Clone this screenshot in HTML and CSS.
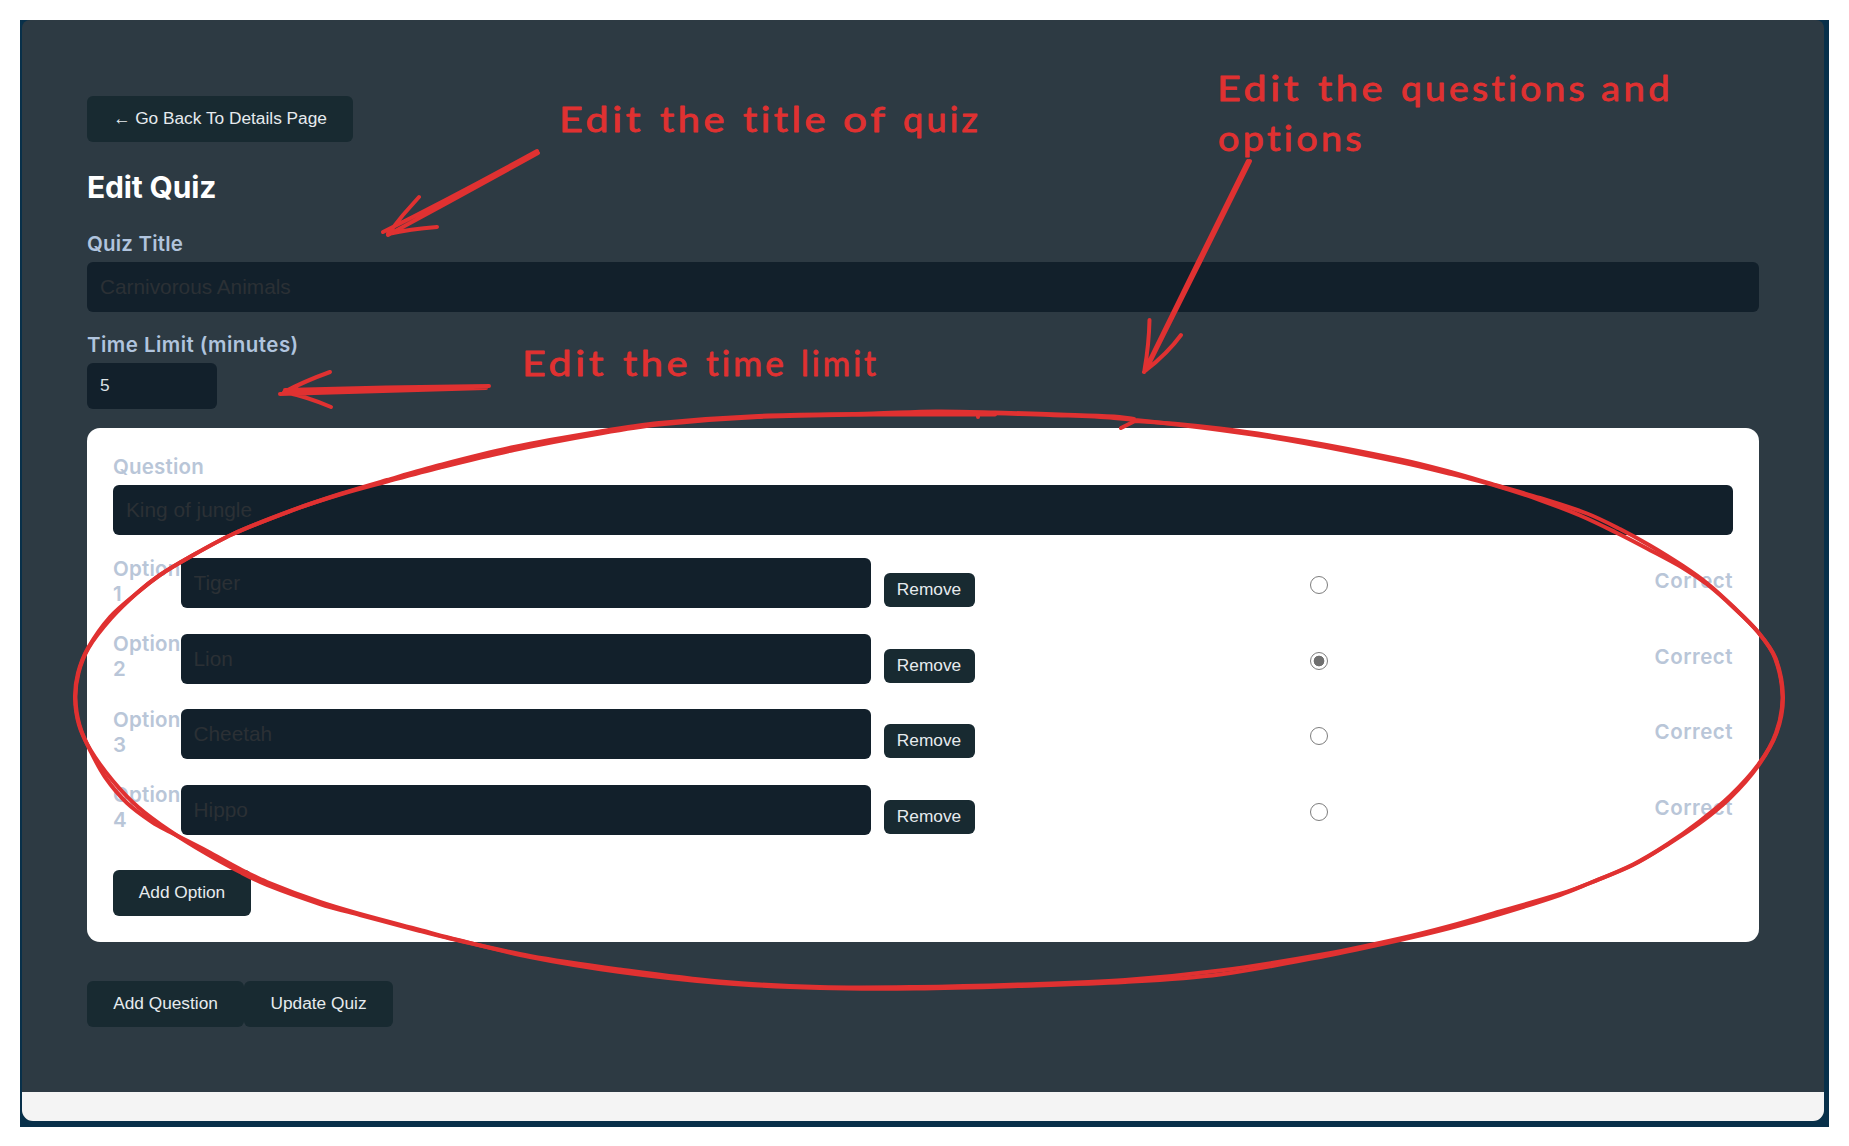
FILE: index.html
```html
<!DOCTYPE html>
<html lang="en">
<head>
<meta charset="utf-8">
<title>Edit Quiz</title>
<link rel="stylesheet" href="styles.css">
</head>
<body>
<div class="frame">
  <div class="window">
    <main class="page">
      <button class="btn back">← Go Back To Details Page</button>
      <h1 class="heading">Edit Quiz</h1>
      <label class="label" for="title">Quiz Title</label>
      <input class="field" id="title" value="Carnivorous Animals">
      <label class="label time-label" for="limit">Time Limit (minutes)</label>
      <input class="field field-small" id="limit" value="5">

      <section class="card">
        <label class="label" for="question">Question</label>
        <input class="field" id="question" value="King of jungle">
        <div class="options">
          <div class="option">
            <label class="label option-label" for="o1">Option 1</label>
            <input class="field option-field" id="o1" value="Tiger">
            <button class="btn remove">Remove</button>
            <div class="choice"><input class="radio" type="radio" name="correct" id="r1"></div>
            <label class="label correct" for="r1">Correct</label>
          </div>
          <div class="option">
            <label class="label option-label" for="o2">Option 2</label>
            <input class="field option-field" id="o2" value="Lion">
            <button class="btn remove">Remove</button>
            <div class="choice"><input class="radio" type="radio" name="correct" id="r2" checked></div>
            <label class="label correct" for="r2">Correct</label>
          </div>
          <div class="option">
            <label class="label option-label" for="o3">Option 3</label>
            <input class="field option-field" id="o3" value="Cheetah">
            <button class="btn remove">Remove</button>
            <div class="choice"><input class="radio" type="radio" name="correct" id="r3"></div>
            <label class="label correct" for="r3">Correct</label>
          </div>
          <div class="option">
            <label class="label option-label" for="o4">Option 4</label>
            <input class="field option-field" id="o4" value="Hippo">
            <button class="btn remove">Remove</button>
            <div class="choice"><input class="radio" type="radio" name="correct" id="r4"></div>
            <label class="label correct" for="r4">Correct</label>
          </div>
        </div>
        <button class="btn add-option">Add Option</button>
      </section>

      <div class="actions">
        <button class="btn add-question">Add Question</button>
        <button class="btn update">Update Quiz</button>
      </div>
    </main>
    <footer class="footer"></footer>
  </div>
</div>

<svg class="notes" width="1849" height="1146" viewBox="0 0 1849 1146">
  <g class="note-text">
    <text y="132"><tspan x="559" textLength="85" lengthAdjust="spacingAndGlyphs">Edit</tspan> <tspan x="660" textLength="68" lengthAdjust="spacingAndGlyphs">the</tspan> <tspan x="743" textLength="86" lengthAdjust="spacingAndGlyphs">title</tspan> <tspan x="843" textLength="45" lengthAdjust="spacingAndGlyphs">of</tspan> <tspan x="903" textLength="78" lengthAdjust="spacingAndGlyphs">quiz</tspan></text>
    <text y="376"><tspan x="522" textLength="85" lengthAdjust="spacingAndGlyphs">Edit</tspan> <tspan x="623" textLength="68" lengthAdjust="spacingAndGlyphs">the</tspan> <tspan x="706" textLength="81" lengthAdjust="spacingAndGlyphs">time</tspan> <tspan x="801" textLength="78" lengthAdjust="spacingAndGlyphs">limit</tspan></text>
    <text y="101"><tspan x="1217" textLength="85" lengthAdjust="spacingAndGlyphs">Edit</tspan> <tspan x="1318" textLength="68" lengthAdjust="spacingAndGlyphs">the</tspan> <tspan x="1401" textLength="187" lengthAdjust="spacingAndGlyphs">questions</tspan> <tspan x="1601" textLength="72" lengthAdjust="spacingAndGlyphs">and</tspan></text>
    <text y="151"><tspan x="1218" textLength="147" lengthAdjust="spacingAndGlyphs">options</tspan></text>
  </g>
  <g class="ink">
    <path d="M537 151Q455 196 383 232M538 153Q462 195 388 235M419 197Q402 215 388 234Q410 229 437 227"/>
    <path d="M489 386Q385 387 285 390M486 388Q385 391 280 394M330 372Q305 381 284 392Q308 397 331 407"/>
    <path d="M1250 161L1200 262L1146 370M1248 161L1198 262L1144 372M1149.500 320Q1149 344 1144.500 370M1181 335Q1168 353 1145 371"/>
    <path id="loop-a"/>
    <path id="loop-b"/>
  </g>
</svg>
<script src="loop.js"></script>
</body>
</html>
```

FILE: styles.css
```css
* { box-sizing: border-box; }

body {
  margin: 0;
  background: #fff;
  font-family: Inter, "Liberation Sans", sans-serif;
}

.frame {
  width: 1809px;
  height: 1107px;
  margin: 20px;
  padding: 0 5px 6px 2px;
  background: #08304a;
}

.window {
  height: 1101px;
  border-radius: 8px 8px 11px 11px;
  overflow: hidden;
  background: #2d3a43;
}

.page {
  height: 1072px;
  padding: 76px 65px 0;
}

.footer {
  height: 29px;
  background: #f4f4f4;
}

.btn {
  display: block;
  height: 46px;
  padding: 0 0 1px;
  border: 0;
  border-radius: 6px;
  background: #182a31;
  color: #e6ebee;
  font: 17.3px "Liberation Sans", sans-serif;
  white-space: nowrap;
}

.back { width: 266px; }

.heading {
  margin: 25px 0 24px;
  color: #fff;
  font-size: 30px;
  font-weight: 700;
  line-height: 40px;
  letter-spacing: -0.15px;
}

.label {
  display: block;
  margin-bottom: 6px;
  color: #b0c4de;
  font-size: 20.5px;
  font-weight: 600;
  line-height: 25px;
  letter-spacing: 0.2px;
}

.time-label {
  margin-top: 20px;
  letter-spacing: 0.45px;
}

.field {
  display: block;
  width: 100%;
  height: 50px;
  padding: 0 13px;
  border: 0;
  border-radius: 6px;
  background: #12202b;
  color: #2b3035;
  font: 20.8px "Liberation Sans", sans-serif;
}

.field-small {
  width: 130px;
  height: 46px;
  padding-bottom: 1px;
  color: #dde3e7;
  font-size: 17.3px;
}

.card {
  height: 514px;
  margin-top: 19px;
  padding: 26px;
  border-radius: 13px;
  background: #fff;
}

.card .label { color: #b9c6d8; }

.options {
  display: grid;
  gap: 25.5px;
  margin-top: 23px;
}

.option {
  display: flex;
  height: 50px;
}

.option-label {
  width: 67.5px;
  margin: -2.5px 0 0;
}

.option-field { width: 690px; }

.remove {
  width: 91px;
  height: 34px;
  margin: 15px 0 0 13px;
}

.choice {
  flex: 1;
  display: flex;
  justify-content: center;
  padding-top: 18px;
}

.radio {
  appearance: none;
  width: 18px;
  height: 18px;
  margin: 0 0 0 8px;
  border: 1.500px solid #7d7d7d;
  border-radius: 50%;
  background: #fff;
}

.radio:checked {
  background: radial-gradient(circle, #707070 5px, #fff 5.7px);
}

.card .correct {
  margin: 10px 0 0;
  letter-spacing: 0.5px;
}

.add-option {
  width: 138px;
  margin-top: 35px;
}

.actions {
  display: flex;
  margin-top: 39px;
}

.add-question { width: 157px; }
.update { width: 149px; }

.notes {
  position: absolute;
  top: 0;
  left: 0;
  pointer-events: none;
}

.note-text {
  fill: #e03131;
  stroke: #e03131;
  stroke-width: 0.8;
  stroke-linejoin: round;
  font: 34px Excalifont, Virgil, Lato, sans-serif;
  font-variant-ligatures: none;
  letter-spacing: 3px;
}

.ink {
  fill: none;
  stroke: #e03131;
  stroke-width: 4;
  stroke-linecap: round;
  stroke-linejoin: round;
}
```

FILE: loop.js
```js
// Hand-drawn loop around the question card: two passes of the same stroke.
const first = [
  [978, 417], [978, 412.5], [1050, 415], [1114, 418], [1220, 430], [1304, 443], [1400, 462],
  [1447, 473], [1497, 486], [1540, 500], [1580, 515.5], [1615, 532], [1647, 548.5],
  [1683, 568], [1708, 585], [1733, 607], [1758, 632], [1775, 658], [1782.5, 697],
  [1776, 733], [1758, 766], [1730, 798], [1700, 823], [1667, 845], [1633, 865],
  [1590, 883], [1560, 895], [1500, 914], [1450, 928], [1400, 940], [1325, 956],
  [1220, 974.5], [1125, 982], [1018, 986], [916, 988.5], [820, 988], [720, 983],
  [620, 972], [530, 957], [450, 938], [420, 930], [360, 914], [320, 902], [267, 882],
  [240, 869], [207, 851], [170, 832], [152, 822], [127, 803], [105, 777], [90, 750],
  [79, 725], [75, 698], [78, 673], [88, 648], [110, 617], [137, 593], [160, 575],
  [188, 558], [233, 534], [293, 510], [340, 494], [387, 480], [440, 465], [514, 447],
  [600, 431.5], [659, 423], [758, 416], [873, 413.5], [936, 411.5], [995, 412.5],
  [1060, 414.5], [1114, 416.5], [1134, 419]
];
const second = [
  [1121, 428], [1135, 421], [1220, 428.5], [1304, 441], [1400, 459.5], [1447, 471],
  [1497, 485.5], [1540, 498], [1587, 513.5], [1620, 529], [1650, 545.5], [1683, 566],
  [1708, 584], [1733, 606.5], [1758, 632], [1775.5, 658], [1783, 697], [1776.5, 733],
  [1758, 765], [1730, 796], [1700, 821], [1667, 844.5], [1633, 864.5], [1590, 883],
  [1560, 894], [1500, 911.500], [1450, 926], [1400, 938.5], [1325, 954], [1220, 970.5],
  [1125, 980], [1018, 984.5], [916, 987], [820, 987], [720, 981.5], [620, 969.5],
  [530, 956], [450, 938.500], [420, 931], [360, 915], [320, 904], [267, 885],
  [240, 872], [207, 854], [170, 831], [138, 807], [113, 781], [90.5, 750], [79.500, 725],
  [75.5, 698], [78.5, 673], [88.500, 648], [111, 618.500], [137, 593], [160, 575],
  [188, 558], [233, 534], [293, 510], [340, 494.5], [387, 481.5], [440, 467.5],
  [514, 450], [600, 433.500], [659, 424.5], [758, 417], [873, 414.500], [936, 414.5], [995, 414.500]
];

// Catmull-Rom style spline: each tangent follows the neighbouring points.
function smooth(points) {
  const direction = points.map((p, i) => {
    const a = points[i - 1] || p;
    const b = points[i + 1] || p;
    const length = Math.hypot(b[0] - a[0], b[1] - a[1]);
    return [(b[0] - a[0]) / length, (b[1] - a[1]) / length];
  });
  let d = `M${points[0]}L${points[1]}`;
  direction[1] = [1, 0.05];
  for (let i = 1; i < points.length - 1; i++) {
    const [x1, y1] = points[i];
    const [x2, y2] = points[i + 1];
    const k = Math.hypot(x2 - x1, y2 - y1) / 3;
    d += `C${x1 + direction[i][0] * k} ${y1 + direction[i][1] * k} ` +
      `${x2 - direction[i + 1][0] * k} ${y2 - direction[i + 1][1] * k} ${x2} ${y2}`;
  }
  return d;
}

document.getElementById("loop-a").setAttribute("d", smooth(first));
document.getElementById("loop-b").setAttribute("d", smooth(second));
```
